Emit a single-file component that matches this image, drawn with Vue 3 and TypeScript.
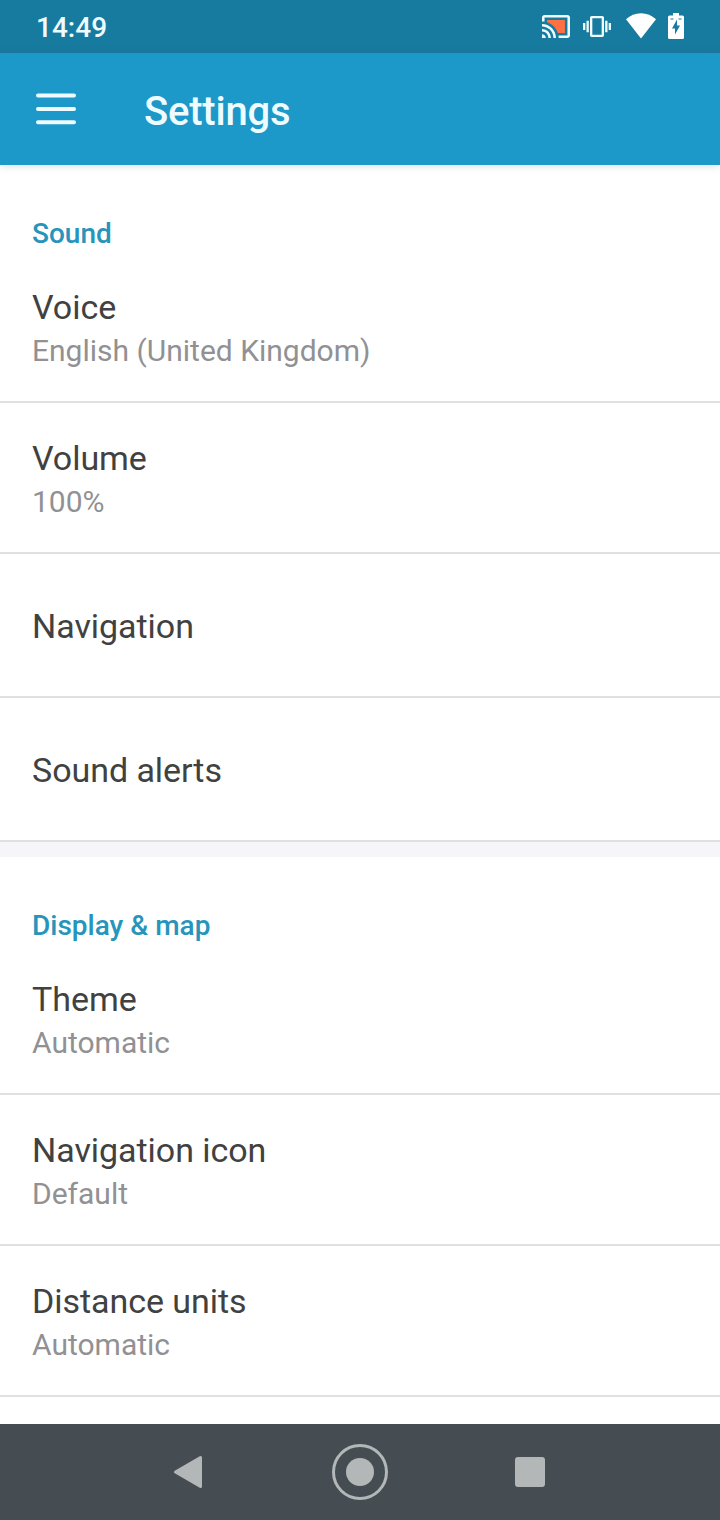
<script setup lang="ts">
interface Setting {
  title: string
  value?: string
}
interface Section {
  heading: string
  settings: Setting[]
}

const sections: Section[] = [
  {
    heading: 'Sound',
    settings: [
      { title: 'Voice', value: 'English (United Kingdom)' },
      { title: 'Volume', value: '100%' },
      { title: 'Navigation' },
      { title: 'Sound alerts' },
    ],
  },
  {
    heading: 'Display & map',
    settings: [
      { title: 'Theme', value: 'Automatic' },
      { title: 'Navigation icon', value: 'Default' },
      { title: 'Distance units', value: 'Automatic' },
    ],
  },
]
</script>

<template>
  <div class="screen">
    <div class="status">
      <span class="clock">14:49</span>
      <div class="status-icons">
        <svg class="cast" width="28" height="23" viewBox="1 3 22 18" preserveAspectRatio="none">
          <path fill="#ff7043" d="M19 7H5v1.63c3.96 1.28 7.09 4.41 8.37 8.37H19V7z" />
          <path fill="#effcff" d="M1 18v3h3c0-1.66-1.34-3-3-3zm0-4v2c2.76 0 5 2.24 5 5h2c0-3.87-3.13-7-7-7zM1 10v2c4.97 0 9 4.03 9 9h2c0-6.08-4.93-11-11-11zm20-7H3c-1.1 0-2 .9-2 2v3h2V5h18v14h-7v2h7c1.1 0 2-.9 2-2V5c0-1.1-.9-2-2-2z" />
        </svg>
        <svg class="vibrate" width="28" height="21" viewBox="0 3 24 18">
          <path fill="#effcff" d="M0 15h2V9H0v6zm3 2h2V7H3v10zm19-8v6h2V9h-2zm-3 8h2V7h-2v10zM16.500 3h-9C6.670 3 6 3.670 6 4.500v15c0 .83.67 1.500 1.500 1.500h9c.83 0 1.500-.67 1.500-1.500v-15c0-.83-.67-1.500-1.500-1.500zM16 19H8V5h8v14z" />
        </svg>
        <svg class="wifi" width="30" height="26" viewBox="0 0 30 26">
          <path fill="#fff" d="M15 25.500L0 6.200C4.200 2.300 9.300.2 15 .2s10.800 2.100 15 6z" />
        </svg>
        <svg class="battery" width="16" height="26" viewBox="0 0 16 26">
          <path fill="#fff" d="M5 0h6v2.500h3.500A1.500 1.500 0 0 1 16 4v20.500a1.500 1.500 0 0 1-1.500 1.500h-13A1.500 1.500 0 0 1 0 24.500V4a1.500 1.500 0 0 1 1.500-1.500H5z" />
          <path fill="#177a9f" d="M9 6.500v6h3L7 21.500v-6H4zM2.500 5.500h3v1h-3zM10.500 5.500h3v1h-3z" />
        </svg>
      </div>
    </div>

    <header class="appbar">
      <svg class="menu" width="40" height="32" viewBox="0 0 40 32">
        <path stroke="#effcff" stroke-width="4" stroke-linecap="round" d="M2 2.500h36M2 16h36M2 29.300h36" />
      </svg>
      <h1>Settings</h1>
    </header>

    <main class="content">
      <section v-for="section in sections" :key="section.heading" class="section">
        <h2>{{ section.heading }}</h2>
        <div
          v-for="item in section.settings"
          :key="item.title"
          class="row"
          :class="{ single: !item.value }"
        >
          <div class="title">{{ item.title }}</div>
          <div v-if="item.value" class="value">{{ item.value }}</div>
        </div>
      </section>
    </main>

    <nav class="navbar">
      <svg width="30" height="34" viewBox="0 0 30 34">
        <path fill="#b3b7b8" stroke="#b3b7b8" stroke-width="3" stroke-linejoin="round" d="M2.500 17L27.500 2.500v29z" />
      </svg>
      <svg class="home" width="58" height="58" viewBox="0 0 58 58">
        <circle cx="29" cy="29" r="26.500" fill="none" stroke="#b3b7b8" stroke-width="3" />
        <circle cx="29" cy="29" r="14" fill="#b3b7b8" />
      </svg>
      <svg width="30" height="30" viewBox="0 0 30 30">
        <rect width="30" height="30" rx="3" fill="#b3b7b8" />
      </svg>
    </nav>
  </div>
</template>

<style>
body {
  margin: 0;
}
</style>

<style scoped>
.screen {
  display: flex;
  flex-direction: column;
  width: 720px;
  height: 1520px;
  overflow: hidden;
  background: #fff;
  font-family: Roboto, "Liberation Sans", sans-serif;
}
svg {
  display: block;
  flex: none;
}
.status {
  display: flex;
  flex: none;
  justify-content: space-between;
  box-sizing: border-box;
  height: 53px;
  padding: 0 36px;
  background: #177a9f;
}
.clock {
  color: #effcff;
  font-size: 28px;
  font-weight: 500;
  line-height: 56px;
}
.status-icons {
  display: flex;
  align-items: flex-start;
  padding-top: 13px;
}
.cast {
  margin: 2px 13px 0 0;
}
.vibrate {
  margin: 3px 15px 0 0;
}
.wifi {
  margin-right: 12px;
}
.appbar {
  display: flex;
  flex: none;
  align-items: center;
  z-index: 1;
  height: 112px;
  padding-left: 36px;
  background: #1c98c9;
  box-shadow: 0 1px 8px rgba(60, 80, 110, 0.2);
}
h1 {
  margin: 6px 0 0 68px;
  color: #effcff;
  font-size: 40px;
  font-weight: 500;
  line-height: 48px;
  letter-spacing: -0.2px;
}
.content {
  flex: 1;
  min-height: 0;
  overflow: hidden;
}
.section + .section {
  border-top: 15px solid #f5f5fa;
}
h2 {
  box-sizing: border-box;
  height: 87px;
  margin: 0;
  padding: 52px 32px 0;
  color: #2795bb;
  font-size: 28px;
  font-weight: 500;
  line-height: 34px;
}
.row {
  box-sizing: border-box;
  height: 151px;
  padding: 35px 32px 0;
  border-bottom: 2px solid #e0e0e0;
}
.row.single {
  height: 144px;
  padding-top: 52px;
}
.title {
  color: #414141;
  font-size: 34px;
  line-height: 40px;
  letter-spacing: -0.05px;
}
.value {
  margin-top: 6px;
  color: #919194;
  font-size: 30px;
  line-height: 36px;
}
.navbar {
  display: flex;
  flex: none;
  align-items: center;
  justify-content: space-between;
  box-sizing: border-box;
  height: 96px;
  padding: 0 175px 0 173px;
  background: #454d52;
}
.home {
  margin-left: 2px;
}
</style>
